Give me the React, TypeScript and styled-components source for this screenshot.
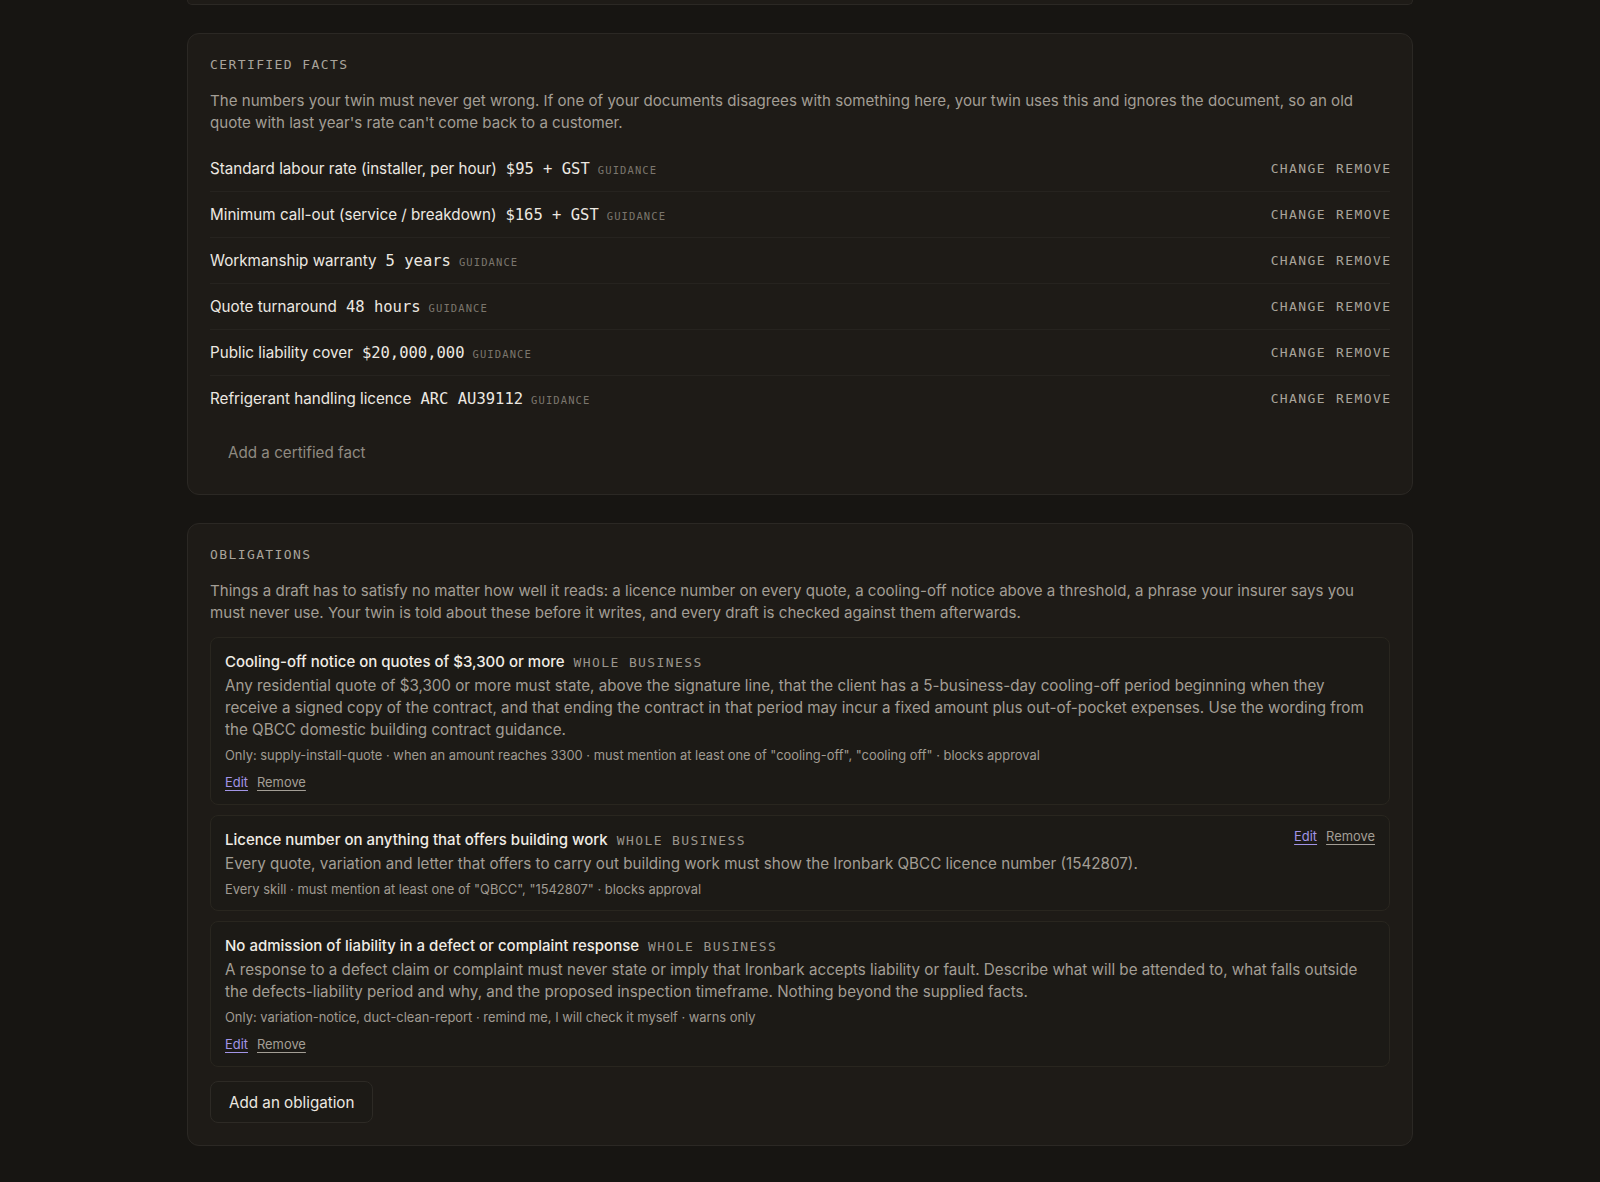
import React from "react";
import styled, { createGlobalStyle } from "styled-components";

const SANS = `"Inter", "Noto Sans", sans-serif`;
const MONO = `"DejaVu Sans Mono", "Liberation Mono", monospace`;

const GlobalStyle = createGlobalStyle`
  html, body { margin: 0; padding: 0; background: #171512; }
  body { font-family: ${SANS}; color: #ece8e1; -webkit-font-smoothing: antialiased; }
  * { box-sizing: border-box; }
`;

const Page = styled.main`
  width: 1226px;
  margin: 0 auto;
  display: flex;
  flex-direction: column;
  gap: 28px;
  padding-bottom: 40px;
`;

const PrevCardEdge = styled.div`
  height: 5px;
  background: #1e1b17;
  border: 1px solid #2b2824;
  border-top: none;
  border-radius: 0 0 12px 12px;
`;

const Card = styled.section`
  background: #1e1b17;
  border: 1px solid #2b2824;
  border-radius: 12px;
  padding: 22px;
`;

const SectionLabel = styled.h2`
  margin: 0 0 16px;
  font-family: ${MONO};
  font-weight: 400;
  font-size: 13px;
  line-height: 18px;
  letter-spacing: 1.4px;
  color: #a9a49b;
  text-transform: uppercase;
`;

const Description = styled.p<{ $after: number }>`
  margin: 0 0 ${(p) => p.$after}px;
  max-width: 1170px;
  font-size: 15.1px;
  line-height: 22px;
  color: #a39e95;
`;

const FactList = styled.div`
  display: flex;
  flex-direction: column;
`;

const FactRow = styled.div`
  display: flex;
  align-items: center;
  justify-content: space-between;
  height: 46px;
  border-bottom: 1px solid #26231f;
  &:last-child {
    height: 45px;
    border-bottom: none;
  }
`;

const FactMain = styled.div`
  display: flex;
  align-items: baseline;
  gap: 9px;
`;

const FactName = styled.span`
  font-size: 15.2px;
  color: #ece8e1;
`;

const FactValue = styled.span`
  font-family: ${MONO};
  font-size: 15.5px;
  color: #ece8e1;
`;

const GuidanceTag = styled.span`
  font-family: ${MONO};
  font-size: 10.5px;
  letter-spacing: 1.1px;
  color: #7b766d;
  margin-left: -1px;
`;

const RowActions = styled.div`
  display: flex;
  gap: 10px;
`;

const MonoButton = styled.button`
  background: none;
  border: none;
  padding: 0;
  font-family: ${MONO};
  font-size: 13px;
  letter-spacing: 1.4px;
  color: #a9a49b;
  cursor: pointer;
  &:last-child { margin-right: -1.4px; }
`;

const AddFactInput = styled.input`
  margin-top: 11px;
  width: 100%;
  height: 40px;
  padding: 0 17px;
  background: transparent;
  border: 1px solid transparent;
  border-radius: 8px;
  font-family: ${SANS};
  font-size: 15.2px;
  color: #ece8e1;
  outline: none;
  &::placeholder { color: #8f8a81; }
`;

const ObligationList = styled.div`
  display: flex;
  flex-direction: column;
  gap: 10px;
`;

const Obligation = styled.article`
  background: #1c1a16;
  border: 1px solid #29261f;
  border-radius: 8px;
  padding: 14px 14px 11px;
`;

const ObHeader = styled.div`
  display: flex;
  align-items: flex-start;
  justify-content: space-between;
  gap: 16px;
`;

const ObTitleLine = styled.div`
  display: flex;
  align-items: baseline;
  gap: 9px;
  line-height: 20px;
`;

const ObTitle = styled.h3`
  margin: 0;
  font-size: 15px;
  font-weight: 500;
  color: #f0ece5;
`;

const Scope = styled.span`
  font-family: ${MONO};
  font-size: 13px;
  letter-spacing: 1.4px;
  color: #9a958c;
`;

const ObBody = styled.p`
  margin: 2px 0 0;
  max-width: 1146px;
  font-size: 15.2px;
  line-height: 22px;
  color: #a39e95;
`;

const ObMeta = styled.div`
  margin-top: 6px;
  font-size: 12.9px;
  line-height: 18px;
  color: #a09b92;
`;

const LinkRow = styled.div<{ $inline?: boolean }>`
  display: flex;
  gap: 9px;
  margin-top: ${(p) => (p.$inline ? -3 : 8)}px;
  line-height: 20px;
`;

const TextLink = styled.button<{ $accent?: boolean }>`
  background: none;
  border: none;
  padding: 0;
  font-family: ${SANS};
  font-size: 12.9px;
  line-height: 20px;
  color: ${(p) => (p.$accent ? "#a295e6" : "#a39e95")};
  text-decoration: underline;
  text-underline-offset: 3px;
  text-decoration-thickness: 1px;
  cursor: pointer;
`;

const AddButton = styled.button`
  margin-top: 14px;
  align-self: flex-start;
  height: 42px;
  padding: 0 18px;
  background: #1c1a16;
  border: 1px solid #2d2a25;
  border-radius: 8px;
  font-family: ${SANS};
  font-size: 15.2px;
  color: #ece8e1;
  cursor: pointer;
`;

const ObSection = styled.div`
  display: flex;
  flex-direction: column;
`;

type Fact = { name: string; value: string };

const facts: Fact[] = [
  { name: "Standard labour rate (installer, per hour)", value: "$95 + GST" },
  { name: "Minimum call-out (service / breakdown)", value: "$165 + GST" },
  { name: "Workmanship warranty", value: "5 years" },
  { name: "Quote turnaround", value: "48 hours" },
  { name: "Public liability cover", value: "$20,000,000" },
  { name: "Refrigerant handling licence", value: "ARC AU39112" },
];

type Ob = { title: string; body: string; meta: string; actionsInHeader?: boolean };

const obligations: Ob[] = [
  {
    title: "Cooling-off notice on quotes of $3,300 or more",
    body:
      "Any residential quote of $3,300 or more must state, above the signature line, that the client has a 5-business-day cooling-off period beginning when they receive a signed copy of the contract, and that ending the contract in that period may incur a fixed amount plus out-of-pocket expenses. Use the wording from the QBCC domestic building contract guidance.",
    meta:
      'Only: supply-install-quote · when an amount reaches 3300 · must mention at least one of "cooling-off", "cooling off" · blocks approval',
  },
  {
    title: "Licence number on anything that offers building work",
    body:
      "Every quote, variation and letter that offers to carry out building work must show the Ironbark QBCC licence number (1542807).",
    meta: 'Every skill · must mention at least one of "QBCC", "1542807" · blocks approval',
    actionsInHeader: true,
  },
  {
    title: "No admission of liability in a defect or complaint response",
    body:
      "A response to a defect claim or complaint must never state or imply that Ironbark accepts liability or fault. Describe what will be attended to, what falls outside the defects-liability period and why, and the proposed inspection timeframe. Nothing beyond the supplied facts.",
    meta: "Only: variation-notice, duct-clean-report · remind me, I will check it myself · warns only",
  },
];

function ObligationCard({ ob }: { ob: Ob }) {
  const links = (
    <LinkRow $inline={ob.actionsInHeader}>
      <TextLink $accent>Edit</TextLink>
      <TextLink>Remove</TextLink>
    </LinkRow>
  );
  return (
    <Obligation>
      <ObHeader>
        <ObTitleLine>
          <ObTitle>{ob.title}</ObTitle>
          <Scope>WHOLE BUSINESS</Scope>
        </ObTitleLine>
        {ob.actionsInHeader && links}
      </ObHeader>
      <ObBody>{ob.body}</ObBody>
      <ObMeta>{ob.meta}</ObMeta>
      {!ob.actionsInHeader && links}
    </Obligation>
  );
}

export default function App() {
  return (
    <>
      <GlobalStyle />
      <Page>
        <PrevCardEdge />
        <Card>
          <SectionLabel>Certified facts</SectionLabel>
          <Description $after={12}>
            The numbers your twin must never get wrong. If one of your documents disagrees with something here, your
            twin uses this and ignores the document, so an old quote with last year's rate can't come back to a
            customer.
          </Description>
          <FactList>
            {facts.map((f) => (
              <FactRow key={f.name}>
                <FactMain>
                  <FactName>{f.name}</FactName>
                  <FactValue>{f.value}</FactValue>
                  <GuidanceTag>GUIDANCE</GuidanceTag>
                </FactMain>
                <RowActions>
                  <MonoButton>CHANGE</MonoButton>
                  <MonoButton>REMOVE</MonoButton>
                </RowActions>
              </FactRow>
            ))}
          </FactList>
          <AddFactInput placeholder="Add a certified fact" />
        </Card>
        <Card>
          <SectionLabel>Obligations</SectionLabel>
          <Description $after={13}>
            Things a draft has to satisfy no matter how well it reads: a licence number on every quote, a cooling-off
            notice above a threshold, a phrase your insurer says you must never use. Your twin is told about these
            before it writes, and every draft is checked against them afterwards.
          </Description>
          <ObSection>
            <ObligationList>
              {obligations.map((ob) => (
                <ObligationCard key={ob.title} ob={ob} />
              ))}
            </ObligationList>
            <AddButton>Add an obligation</AddButton>
          </ObSection>
        </Card>
      </Page>
    </>
  );
}
